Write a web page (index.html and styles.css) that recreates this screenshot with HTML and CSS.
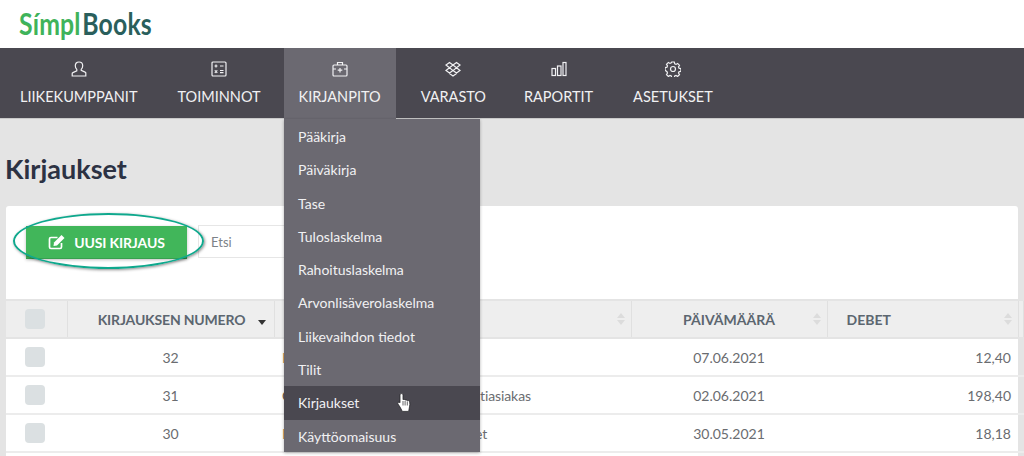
FILE: index.html
```html
<!DOCTYPE html>
<html lang="fi">
<head>
<meta charset="utf-8">
<title>Kirjaukset</title>
<link rel="stylesheet" href="styles.css">
</head>
<body>
<header class="brand"><span class="logo"><span class="logo-a">Símpl</span><span class="logo-b">Books</span></span></header>
<nav class="nav">
  <a class="nav-item i1"><svg class="ico" viewBox="0 0 16 16"><path d="M8 1c-2.300 0-3.700 1.600-3.700 3.800 0 1.500.6 2.800 1.500 3.600v1.500l-3.900 1.700c-.5.200-.7.600-.7 1V15h13.600v-2.900c0-.4-.2-.8-.7-1l-3.900-1.700V8.400c.9-.8 1.500-2.100 1.500-3.600C11.700 2.600 10.300 1 8 1z"/></svg><span>LIIKEKUMPPANIT</span></a>
  <a class="nav-item i2"><svg class="ico" viewBox="0 0 16 16"><rect x="1" y="1" width="14" height="14" rx="1"/><path d="M3.500 5h3M5 3.500v3M9 5h3.500M3.800 9.300l2.500 2.500M6.300 9.300l-2.500 2.500M9 9.500h3.500M9 11.700h3.500"/></svg><span>TOIMINNOT</span></a>
  <a class="nav-item i3 open"><svg class="ico" viewBox="0 0 16 16"><rect x="1" y="4" width="14" height="11" rx="1"/><path d="M5.500 4V1.500h5V4M8 7v4.500M5.700 9.200h4.600M1 8h3M12 8h3"/></svg><span>KIRJANPITO</span></a>
  <a class="nav-item i4"><svg class="ico" viewBox="0 0 16 16"><path d="M4.500 1.500 1 4l3.500 2.800L1 9.500l3.500 2.600L8 9.600l3.500 2.500L15 9.500l-3.500-2.700L15 4l-3.500-2.500L8 4.100zM4.500 6.800 8 4.100l3.500 2.700L8 9.600zM4.500 12.600 8 15l3.500-2.400"/></svg><span>VARASTO</span></a>
  <a class="nav-item i5"><svg class="ico" viewBox="0 0 16 16"><rect x="1" y="7.500" width="3.500" height="7"/><rect x="6.500" y="5" width="3.500" height="9.500"/><rect x="12" y="1.500" width="3" height="13"/></svg><span>RAPORTIT</span></a>
  <a class="nav-item i6"><svg class="ico" viewBox="0 0 16 16"><circle cx="8" cy="8" r="2.500"/><path d="M6.700 1h2.600l.4 1.900 1.300.5 1.600-1 1.900 1.900-1 1.600.5 1.300 1.900.4v2.700l-1.900.4-.5 1.300 1 1.600-1.900 1.900-1.600-1-1.300.5-.4 1.900H6.700l-.4-1.900-1.300-.5-1.600 1-1.900-1.900 1-1.600-.5-1.300L.1 9.300V6.600L2 6.200l.5-1.300-1-1.600 1.900-1.900 1.600 1 1.300-.5z"/></svg><span>ASETUKSET</span></a>
</nav>
<main class="page">
  <h1 class="title">Kirjaukset</h1>
  <section class="card">
    <div class="toolbar">
      <button class="btn-new"><svg class="btn-ico" viewBox="0 0 18 16"><path d="M13.500 9v4a1.500 1.500 0 0 1-1.500 1.500H3A1.500 1.500 0 0 1 1.500 13V5A1.500 1.500 0 0 1 3 3.500h6.500" fill="none" stroke="#fff" stroke-width="1.700"/><path d="M6 8.500 13.500 1l3 3L9 11.500l-3.500.6z" fill="#fff"/></svg>UUSI KIRJAUS</button>
      <input class="search" placeholder="Etsi">
    </div>
    <table class="grid">
      <colgroup><col class="c1"><col class="c2"><col class="c3"><col class="c4"><col class="c5"><col></colgroup>
      <thead>
        <tr>
          <th><span class="check"></span></th>
          <th class="num-h">KIRJAUKSEN NUMERO<span class="sort-down"></span></th>
          <th><span class="sort"></span></th>
          <th class="date-h">PÄIVÄMÄÄRÄ<span class="sort"></span></th>
          <th class="deb-h">DEBET<span class="sort"></span></th>
          <th></th>
        </tr>
      </thead>
      <tbody>
        <tr><td><span class="check"></span></td><td class="ctr">32</td><td><div class="txt"><span class="mark">E</span></div></td><td class="ctr">07.06.2021</td><td class="rgt">12,40</td><td></td></tr>
        <tr><td><span class="check"></span></td><td class="ctr">31</td><td><div class="txt"><span class="mark dark">C</span><span class="tail">tiasiakas</span></div></td><td class="ctr">02.06.2021</td><td class="rgt">198,40</td><td></td></tr>
        <tr><td><span class="check"></span></td><td class="ctr">30</td><td><div class="txt"><span class="mark">E</span><span class="tail short">et</span></div></td><td class="ctr">30.05.2021</td><td class="rgt">18,18</td><td></td></tr>
      </tbody>
    </table>
  </section>
  <div class="ring"></div>
</main>
<ul class="menu">
  <li>Pääkirja</li>
  <li>Päiväkirja</li>
  <li>Tase</li>
  <li>Tuloslaskelma</li>
  <li>Rahoituslaskelma</li>
  <li>Arvonlisäverolaskelma</li>
  <li>Liikevaihdon tiedot</li>
  <li>Tilit</li>
  <li class="active">Kirjaukset<svg class="hand" viewBox="0 0 14 19"><path d="M4.500.6c.9 0 1.500.6 1.500 1.500v4.600c.9-.4 1.700-.3 2.100.4.900-.4 1.800-.2 2.200.6 1.200-.4 2.200.2 2.400 1.300.3 1.700.2 3.300-.2 4.800l-.8 4.600H5.300l-2.100-4.100L.9 10.900c-.6-1.200.7-2.300 1.800-1.400l.3.300V2.100C3 1.200 3.600.6 4.500.6z" fill="#fff" stroke="#26262a" stroke-width=".8"/><path d="M6 8v4.500M8.100 8v4.500M10.300 8.500v4" stroke="#26262a" stroke-width=".7"/></svg></li>
  <li>Käyttöomaisuus</li>
</ul>
</body>
</html>
```
FILE: styles.css
```css
* { box-sizing: border-box; }
html, body { margin: 0; height: 456px; overflow: hidden; }
body { position: relative; background: #e4e4e4; font-family: Lato, "Liberation Sans", sans-serif; color: #555a62; }
.brand { height: 48px; background: #fff; padding: 6px 0 0 19px; }
.logo { display: inline-block; font-size: 31px; line-height: 34px; font-weight: 700; transform: scaleX(.8); transform-origin: 0 0; white-space: nowrap; letter-spacing: .2px; }
.logo-a { color: #3fb35a; }
.logo-b { color: #2a5f5c; margin-left: 2px; }
.nav { display: flex; height: 71px; background: #4a4850; color: #f1f1f3; border-bottom: 1px solid #c9c9c9; }
.nav-item { display: flex; flex-direction: column; align-items: center; padding-top: 13px; font-size: 14.500px; line-height: 17px; }
.nav-item span { margin-top: 11px; white-space: nowrap; }
.i1 { margin-left: 20px; }
.i2 { margin-left: 40px; }
.i3 { margin-left: 23px; width: 112px; }
.i4 { margin-left: 25px; }
.i5 { margin-left: 38px; }
.i6 { margin-left: 40px; }
.open { background: #6b6971; height: 72px; }
.ico { width: 16px; height: 16px; fill: none; stroke: #f1f1f3; stroke-width: 1.200; }
.page { position: relative; padding: 0 6px; }
.title { margin: 0 0 0 -1px; padding-top: 33px; height: 87px; font-size: 27px; line-height: 34px; font-weight: 700; color: #2c3243; }
.card { background: #fff; border-radius: 3px; height: 260px; }
.toolbar { display: flex; align-items: flex-start; height: 93px; padding: 20px 0 0 20px; }
.btn-new { display: flex; align-items: center; justify-content: center; gap: 8px; width: 161px; height: 33px; padding: 0; border: 0; border-bottom: 1px solid #37a04f; background: #41b65a; color: #fff; font: 700 14px Lato, sans-serif; letter-spacing: -.15px; box-shadow: 0 1px 3px rgba(0,0,0,.25); }
.btn-ico { width: 18px; height: 16px; }
.search { width: 86px; height: 33px; margin: -1px 0 0 11px; padding: 0 12px; border: 1px solid #e6e6e6; border-right: 0; font: 13px Lato, sans-serif; color: #7c8288; outline: 0; background: #fff; }
.search::placeholder { color: #7c8288; opacity: 1; }
.grid { width: 1018px; table-layout: fixed; border-collapse: collapse; font-size: 14px; color: #6a6c70; }
.c1 { width: 61px; } .c2 { width: 207px; } .c3 { width: 357px; } .c4 { width: 196px; } .c5 { width: 191px; }
.grid th { position: relative; height: 38px; background: #eeeeee; border: 0; border-top: 2px solid #e4e4e4; border-bottom: 2px solid #e4e4e4; border-right: 1px solid #e0e0e0; font-weight: 700; color: #5c6670; font-size: 14px; text-align: center; padding: 0; }
.grid td { height: 38px; padding: 0; border-bottom: 2px solid #ececec; text-align: center; white-space: nowrap; overflow: hidden; }
.txt { display: grid; grid-template-columns: 198px auto; justify-content: start; padding-left: 8px; text-align: left; }
.tail { letter-spacing: -.1px; }
.tail.short { margin-left: -5px; }
.grid td.rgt { text-align: right; padding-right: 7px; }
.grid th.deb-h { text-align: left; padding-left: 19px; }
.mark { color: #c8955a; }
.mark.dark { color: #6b5a48; }
.check { display: block; width: 20px; height: 20px; margin-left: 19px; background: #dbe0e2; border-radius: 4px; }
.grid th.num-h { padding-left: 2px; letter-spacing: -.18px; }
.sort-down { position: absolute; right: 8px; top: 19px; border: 4px solid transparent; border-top: 5px solid #333; border-bottom: 0; }
.sort { position: absolute; right: 5px; top: 12px; width: 9px; height: 12px; }
.sort::before, .sort::after { content: ""; position: absolute; left: 0; border: 4.500px solid transparent; }
.sort::before { top: 0; border-top: 0; border-bottom: 5px solid #dcdcdc; }
.sort::after { bottom: 0; border-bottom: 0; border-top: 5px solid #dcdcdc; }
.ring { position: absolute; left: 13px; top: 94px; width: 191px; height: 56px; border: 2px solid #0fa88d; border-radius: 50%; box-shadow: 1px 1px 3px rgba(0,0,0,.45); }
.menu { position: absolute; left: 284px; top: 119px; width: 196px; height: 333px; margin: 0; padding: 1px 0 0; list-style: none; background: #6b6971; color: #f1f1f3; font-size: 14px; box-shadow: 0 1px 3px rgba(0,0,0,.3); }
.menu li { position: relative; height: 33.300px; padding: 0 14px; line-height: 34.500px; }
.active { background: #4a4850; }
.hand { position: absolute; left: 113px; top: 7px; width: 14px; height: 19px; }
```
